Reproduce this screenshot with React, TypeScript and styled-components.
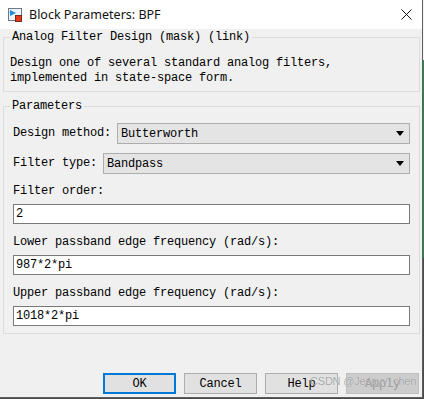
import React from "react";
import styled, { createGlobalStyle } from "styled-components";

const Global = createGlobalStyle`
  html, body {
    margin: 0;
    padding: 0;
  }
  body {
    width: 424px;
    height: 399px;
    overflow: hidden;
    background: linear-gradient(to bottom, #f4f4f4 0 60px, #1e8c4a 60px 258px, #4a4a4a 258px);
  }
`;

const mono = `"Liberation Mono", "DejaVu Sans Mono", monospace`;

const Window = styled.div`
  position: relative;
  width: 423px;
  height: 398px;
  box-sizing: border-box;
  border-right: 1px solid #5e5e5e;
  border-bottom: 1px solid #5e5e5e;
  background: #f0f0f0;
  display: flex;
  flex-direction: column;
  font-family: ${mono};
  font-size: 12px;
  letter-spacing: -0.2px;
  color: #000;
`;

const TitleBar = styled.div`
  height: 29px;
  flex: none;
  background: #fff;
  display: flex;
  align-items: center;
  padding-left: 8px;
  padding-right: 10px;
`;

const Title = styled.span`
  margin-left: 6px;
  font-family: "Noto Sans", "Liberation Sans", sans-serif;
  font-size: 12.5px;
  letter-spacing: 0;
  color: #111;
  flex: 1;
`;

const Body = styled.div`
  flex: 1;
  display: flex;
  flex-direction: column;
  padding: 1px 2px 3px 3px;
`;

const Group = styled.fieldset<{ $pad: string }>`
  margin: 0;
  min-width: 0;
  border: 1px solid #dcdcdc;
  padding: ${(p) => p.$pad};
  & + & {
    margin-top: 7px;
  }
`;

const Legend = styled.legend<{ $shift: number }>`
  padding: 0 2px;
  margin-left: ${(p) => p.$shift}px;
  line-height: 15px;
`;

const Description = styled.p`
  margin: 0;
  line-height: 15px;
  white-space: pre;
`;

const Params = styled.div`
  display: flex;
  flex-direction: column;
`;

const SelectRow = styled.div`
  display: flex;
  align-items: center;
  gap: 6px;
  & + & {
    margin-top: 9px;
  }
`;

const Label = styled.span`
  line-height: 15px;
  white-space: pre;
`;

const Select = styled.div`
  flex: 1;
  height: 21px;
  box-sizing: border-box;
  border: 1px solid #adadad;
  background: #e4e4e4;
  display: flex;
  align-items: center;
  padding: 0 5px 0 3px;
  svg {
    margin-left: auto;
  }
`;

const Field = styled.div<{ $top: number }>`
  display: flex;
  flex-direction: column;
  gap: 5px;
  margin-top: ${(p) => p.$top}px;
`;

const TextInput = styled.input`
  height: 20px;
  box-sizing: border-box;
  border: 1px solid #7a7a7a;
  background: #fff;
  margin: 0;
  padding: 0 2px;
  font-family: ${mono};
  font-size: 12px;
  letter-spacing: -0.2px;
  color: #000;
  outline: none;
`;

const Footer = styled.div`
  margin-top: auto;
  display: flex;
  justify-content: flex-end;
  gap: 8px;
  padding-right: 1px;
`;

const Button = styled.button<{ $primary?: boolean }>`
  width: 73px;
  height: 21px;
  box-sizing: border-box;
  margin: 0;
  padding: 0;
  font-family: ${mono};
  font-size: 12px;
  letter-spacing: -0.2px;
  color: #000;
  background: #e1e1e1;
  border: ${(p) => (p.$primary ? "2px solid #0078d7" : "1px solid #adadad")};
  &:disabled {
    background: #cccccc;
    border-color: #bfbfbf;
    color: #9a9a9a;
  }
`;

const Watermark = styled.span`
  position: absolute;
  left: 310px;
  top: 375px;
  white-space: nowrap;
  font-family: "Liberation Sans", "Noto Sans", sans-serif;
  font-size: 11px;
  letter-spacing: -0.2px;
  color: rgba(115, 115, 115, 0.6);
  text-shadow: 0 0 1px rgba(255, 255, 255, 0.8);
  pointer-events: none;
`;

function BlockIcon() {
  return (
    <svg width="15" height="14" viewBox="0 0 15 14">
      <rect x="0.5" y="0.5" width="13" height="12" fill="#eef3f8" stroke="#6a7a8a" />
      <path d="M2 2 L8 5 L2 8 Z" fill="#1f8fd6" />
      <rect x="1.5" y="4" width="2" height="1" fill="#1f8fd6" />
      <rect x="7.5" y="7.5" width="6" height="6" fill="#e8381c" stroke="#7a2a1a" />
    </svg>
  );
}

function CloseIcon() {
  return (
    <svg width="11" height="11" viewBox="0 0 11 11">
      <path d="M0.5 0.5 L10.5 10.5 M10.5 0.5 L0.5 10.5" stroke="#111" strokeWidth="1" />
    </svg>
  );
}

function Arrow() {
  return (
    <svg width="8" height="5" viewBox="0 0 8 5">
      <path d="M0 0 H8 L4 5 Z" fill="#000" />
    </svg>
  );
}

const fields = [
  { label: "Filter order:", value: "2", top: 10 },
  { label: "Lower passband edge frequency (rad/s):", value: "987*2*pi", top: 11 },
  { label: "Upper passband edge frequency (rad/s):", value: "1018*2*pi", top: 11 },
];

export default function App() {
  return (
    <>
      <Global />
      <Window>
        <TitleBar>
          <BlockIcon />
          <Title>Block Parameters: BPF</Title>
          <CloseIcon />
        </TitleBar>
        <Body>
          <Group $pad="11px 6px 5px 6px">
            <Legend $shift={0}>Analog Filter Design (mask) (link)</Legend>
            <Description>
              {"Design one of several standard analog filters,\nimplemented in state-space form."}
            </Description>
          </Group>
          <Group $pad="9px 9px 7px 9px">
            <Legend $shift={-3}>Parameters</Legend>
            <Params>
              <SelectRow>
                <Label>Design method:</Label>
                <Select>
                  Butterworth
                  <Arrow />
                </Select>
              </SelectRow>
              <SelectRow>
                <Label>Filter type:</Label>
                <Select>
                  Bandpass
                  <Arrow />
                </Select>
              </SelectRow>
              {fields.map((f) => (
                <Field key={f.label} $top={f.top}>
                  <Label>{f.label}</Label>
                  <TextInput defaultValue={f.value} />
                </Field>
              ))}
            </Params>
          </Group>
          <Footer>
            <Button $primary>OK</Button>
            <Button>Cancel</Button>
            <Button>Help</Button>
            <Button disabled>Apply</Button>
          </Footer>
        </Body>
        <Watermark>CSDN @Jesayy_chen</Watermark>
      </Window>
    </>
  );
}
